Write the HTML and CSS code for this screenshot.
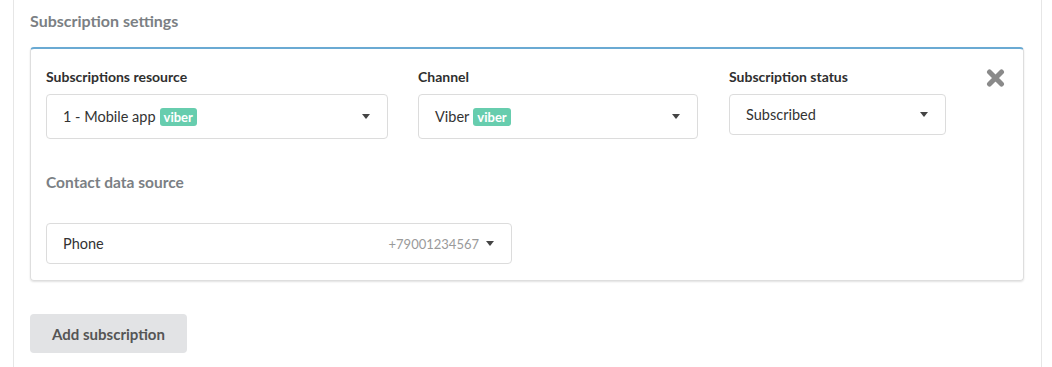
FILE: index.html
```html
<!DOCTYPE html>
<html lang="en">
<head>
    <meta charset="UTF-8">
    <meta name="viewport" content="width=device-width, initial-scale=1.0">
    <title>Subscription settings</title>
    <link rel="stylesheet" href="styles.css">
</head>
<body>
    <div class="panel">
        <h3 class="panel-title">Subscription settings</h3>

        <div class="card">
            <div class="row">
                <div class="field field-resource">
                    <label>Subscriptions resource</label>
                    <div class="select">
                        <span class="value">1 - Mobile app <span class="badge">viber</span></span>
                        <span class="caret"></span>
                    </div>
                </div>

                <div class="field field-channel">
                    <label>Channel</label>
                    <div class="select">
                        <span class="value">Viber <span class="badge">viber</span></span>
                        <span class="caret"></span>
                    </div>
                </div>

                <div class="field field-status">
                    <label>Subscription status</label>
                    <div class="select select-small">
                        <span class="value">Subscribed</span>
                        <span class="caret"></span>
                    </div>
                </div>

                <span class="remove" title="Remove">
                    <svg width="19" height="18" viewBox="0 0 19 18">
                        <path d="M3.5 3 L15.5 15 M15.5 3 L3.5 15" stroke="#8a8a8a" stroke-width="5" stroke-linecap="round"/>
                    </svg>
                </span>
            </div>

            <h4 class="section-title">Contact data source</h4>

            <div class="select select-small select-contact">
                <span class="value">Phone</span>
                <span class="hint">+79001234567</span>
                <span class="caret"></span>
            </div>
        </div>

        <button class="btn-add">Add subscription</button>
    </div>
</body>
</html>
```

FILE: styles.css
```css
body {
    font-family: Lato, 'Noto Sans', sans-serif;
    background-color: #fff;
    margin: 0;
    color: #333;
}

.panel {
    margin: 0 10px 0 13px;
    padding: 0 17px 0 16px;
    height: 367px;
    border-left: 1px solid #e6e6e6;
    border-right: 1px solid #e6e6e6;
    box-sizing: border-box;
}

.panel-title {
    margin: 0;
    padding-top: 12px;
    height: 47px;
    box-sizing: border-box;
    font-size: 16px;
    line-height: 18px;
    font-weight: 700;
    color: #7b7f84;
}

.card {
    border: 1px solid #dedede;
    border-top: 2px solid #6aaad3;
    border-radius: 4px;
    box-shadow: 0 1px 2px rgba(0, 0, 0, 0.12);
    padding: 20px 16px 16px 15px;
}

.row {
    display: flex;
    align-items: flex-start;
}

.field label {
    display: block;
    font-size: 14px;
    font-weight: 700;
    line-height: 16px;
    color: #2f2f2f;
    margin-bottom: 9px;
}

.field-resource {
    width: 342px;
    margin-right: 30px;
}

.field-channel {
    width: 280px;
    margin-right: 31px;
}

.field-status {
    width: 217px;
}

.select {
    display: flex;
    align-items: center;
    height: 45px;
    padding: 0 17px 0 16px;
    border: 1px solid #dcdcdc;
    border-radius: 4px;
    box-sizing: border-box;
    font-size: 14.5px;
    color: #333;
}

.select-small {
    height: 41px;
}

.value {
    flex: 1;
    display: flex;
    align-items: center;
    gap: 4px;
}

.badge {
    display: inline-block;
    background-color: #67cdae;
    color: #fff;
    font-size: 13px;
    font-weight: 700;
    line-height: 18px;
    padding: 0 4px;
    border-radius: 3px;
}

.caret {
    width: 0;
    height: 0;
    border-left: 4px solid transparent;
    border-right: 4px solid transparent;
    border-top: 5px solid #444;
}

.remove {
    margin-left: auto;
    margin-right: 2px;
    line-height: 0;
    cursor: pointer;
}

.section-title {
    margin: 35px 0 0;
    font-size: 15.5px;
    font-weight: 700;
    line-height: 16px;
    color: #7b7f84;
}

.select-contact {
    width: 466px;
    margin-top: 33px;
}

.hint {
    color: #9a9a9a;
    font-size: 13px;
    margin-right: 7px;
}

.btn-add {
    margin-top: 33px;
    width: 157px;
    height: 39px;
    font-family: inherit;
    font-size: 15px;
    font-weight: 700;
    color: #555;
    background-color: #e2e3e5;
    border: none;
    border-radius: 4px;
    cursor: pointer;
}
```
